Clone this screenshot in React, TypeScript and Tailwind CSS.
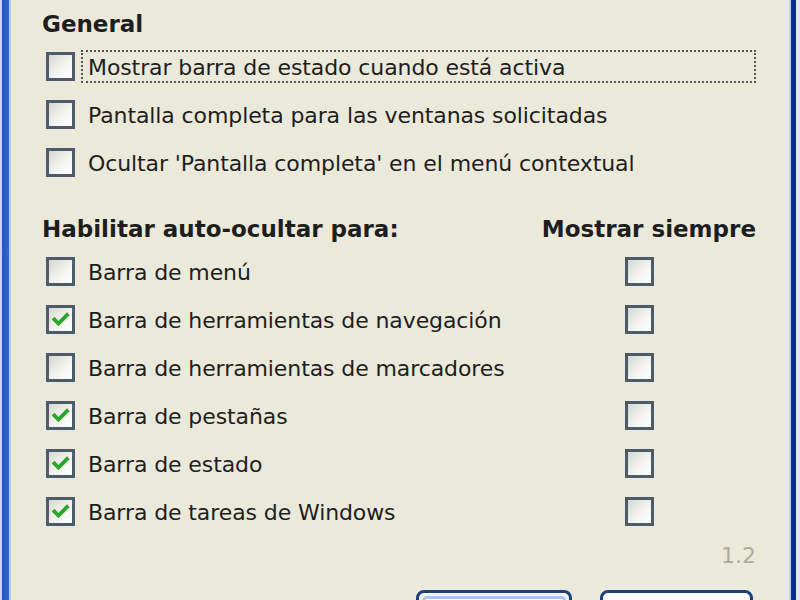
import React from "react";

type Row = { label: string; hide: boolean };

const rows: Row[] = [
  { label: "Barra de menú", hide: false },
  { label: "Barra de herramientas de navegación", hide: true },
  { label: "Barra de herramientas de marcadores", hide: false },
  { label: "Barra de pestañas", hide: true },
  { label: "Barra de estado", hide: true },
  { label: "Barra de tareas de Windows", hide: true },
];

function CheckBox({ checked }: { checked: boolean }) {
  return (
    <div className="relative w-[29px] h-[29px] shrink-0 border-[3px] border-[#4d5b6b] bg-gradient-to-br from-[#d6d5cd] via-[#f1f1ec] to-white">
      {checked && (
        <svg
          className="absolute left-[3px] top-[4px]"
          width="18"
          height="16"
          viewBox="0 0 18 16"
        >
          <path
            d="M2.5 7.5 L6.5 11.5 L15 3"
            fill="none"
            stroke="#2aa52a"
            strokeWidth="3.8"
            strokeLinecap="square"
          />
        </svg>
      )}
    </div>
  );
}

function Label({ children }: { children: React.ReactNode }) {
  return (
    <span className="pt-[4px] text-[22px] tracking-[-0.1px] text-[#1e1e1e] leading-none whitespace-nowrap">
      {children}
    </span>
  );
}

function Heading({ children }: { children: React.ReactNode }) {
  return (
    <span className="text-[23px] font-bold text-[#1e1e1e] leading-none whitespace-nowrap">{children}</span>
  );
}

export default function App() {
  return (
    <div
      className="w-[800px] h-[600px] overflow-hidden flex bg-[#ebe9d9]"
      style={{ fontFamily: '"DejaVu Sans", "Liberation Sans", sans-serif' }}
    >
      {/* left window frame */}
      <div className="w-[2px] h-full bg-[#c9d4ee]" />
      <div className="w-[7px] h-full bg-gradient-to-r from-[#2458c8] to-[#2f66d6]" />
      <div className="w-[2px] h-full bg-[#b6cdf2]" />

      {/* dialog body */}
      <div className="flex-1 flex flex-col pl-[31px] pr-[33px] pt-[6px]">
        <div className="h-[36px] shrink-0 flex items-center">
          <Heading>General</Heading>
        </div>

        <div className="h-[48px] shrink-0 flex items-center pl-[4px]">
          <CheckBox checked={false} />
          <div className="ml-[6px] flex-1 h-[33px] flex items-center pl-[5px] border-2 border-dotted border-[#555]">
            <Label>Mostrar barra de estado cuando está activa</Label>
          </div>
        </div>
        <div className="h-[48px] shrink-0 flex items-center gap-[13px] pl-[4px]">
          <CheckBox checked={false} />
          <Label>Pantalla completa para las ventanas solicitadas</Label>
        </div>
        <div className="h-[48px] shrink-0 flex items-center gap-[13px] pl-[4px]">
          <CheckBox checked={false} />
          <Label>Ocultar 'Pantalla completa' en el menú contextual</Label>
        </div>

        <div className="mt-[25px] h-[36px] shrink-0 flex items-center justify-between">
          <Heading>Habilitar auto-ocultar para:</Heading>
          <Heading>Mostrar siempre</Heading>
        </div>

        {rows.map((r) => (
          <div key={r.label} className="h-[48px] shrink-0 flex items-center pl-[4px]">
            <div className="flex-1 flex items-center gap-[13px]">
              <CheckBox checked={r.hide} />
              <Label>{r.label}</Label>
            </div>
            <div className="w-[131px] flex">
              <CheckBox checked={false} />
            </div>
          </div>
        ))}

        <div className="h-[42px] shrink-0 flex items-center justify-end">
          <span className="text-[22px] text-[#aeab9c] leading-none">1.2</span>
        </div>

        <div className="mt-[13px] shrink-0 flex justify-end gap-[28px] pr-[3px]">
          <div className="w-[156px] h-[50px] rounded-[8px] border-[3px] border-[#1f3f78] bg-[#f4f4f0] p-[3px]">
            <div className="w-full h-full rounded-[5px] border-[3px] border-[#a9c4ee] bg-gradient-to-b from-white to-[#ecebe4]" />
          </div>
          <div className="w-[153px] h-[50px] rounded-[8px] border-[3px] border-[#1f3f78] bg-gradient-to-b from-white to-[#ecebe4]" />
        </div>
      </div>

      {/* right window frame */}
      <div className="w-[2px] h-full bg-[#c4d0ef]" />
      <div className="w-[5px] h-full bg-[#0b2a96]" />
      <div className="w-[4px] h-full bg-[#dfe5f7]" />
    </div>
  );
}
